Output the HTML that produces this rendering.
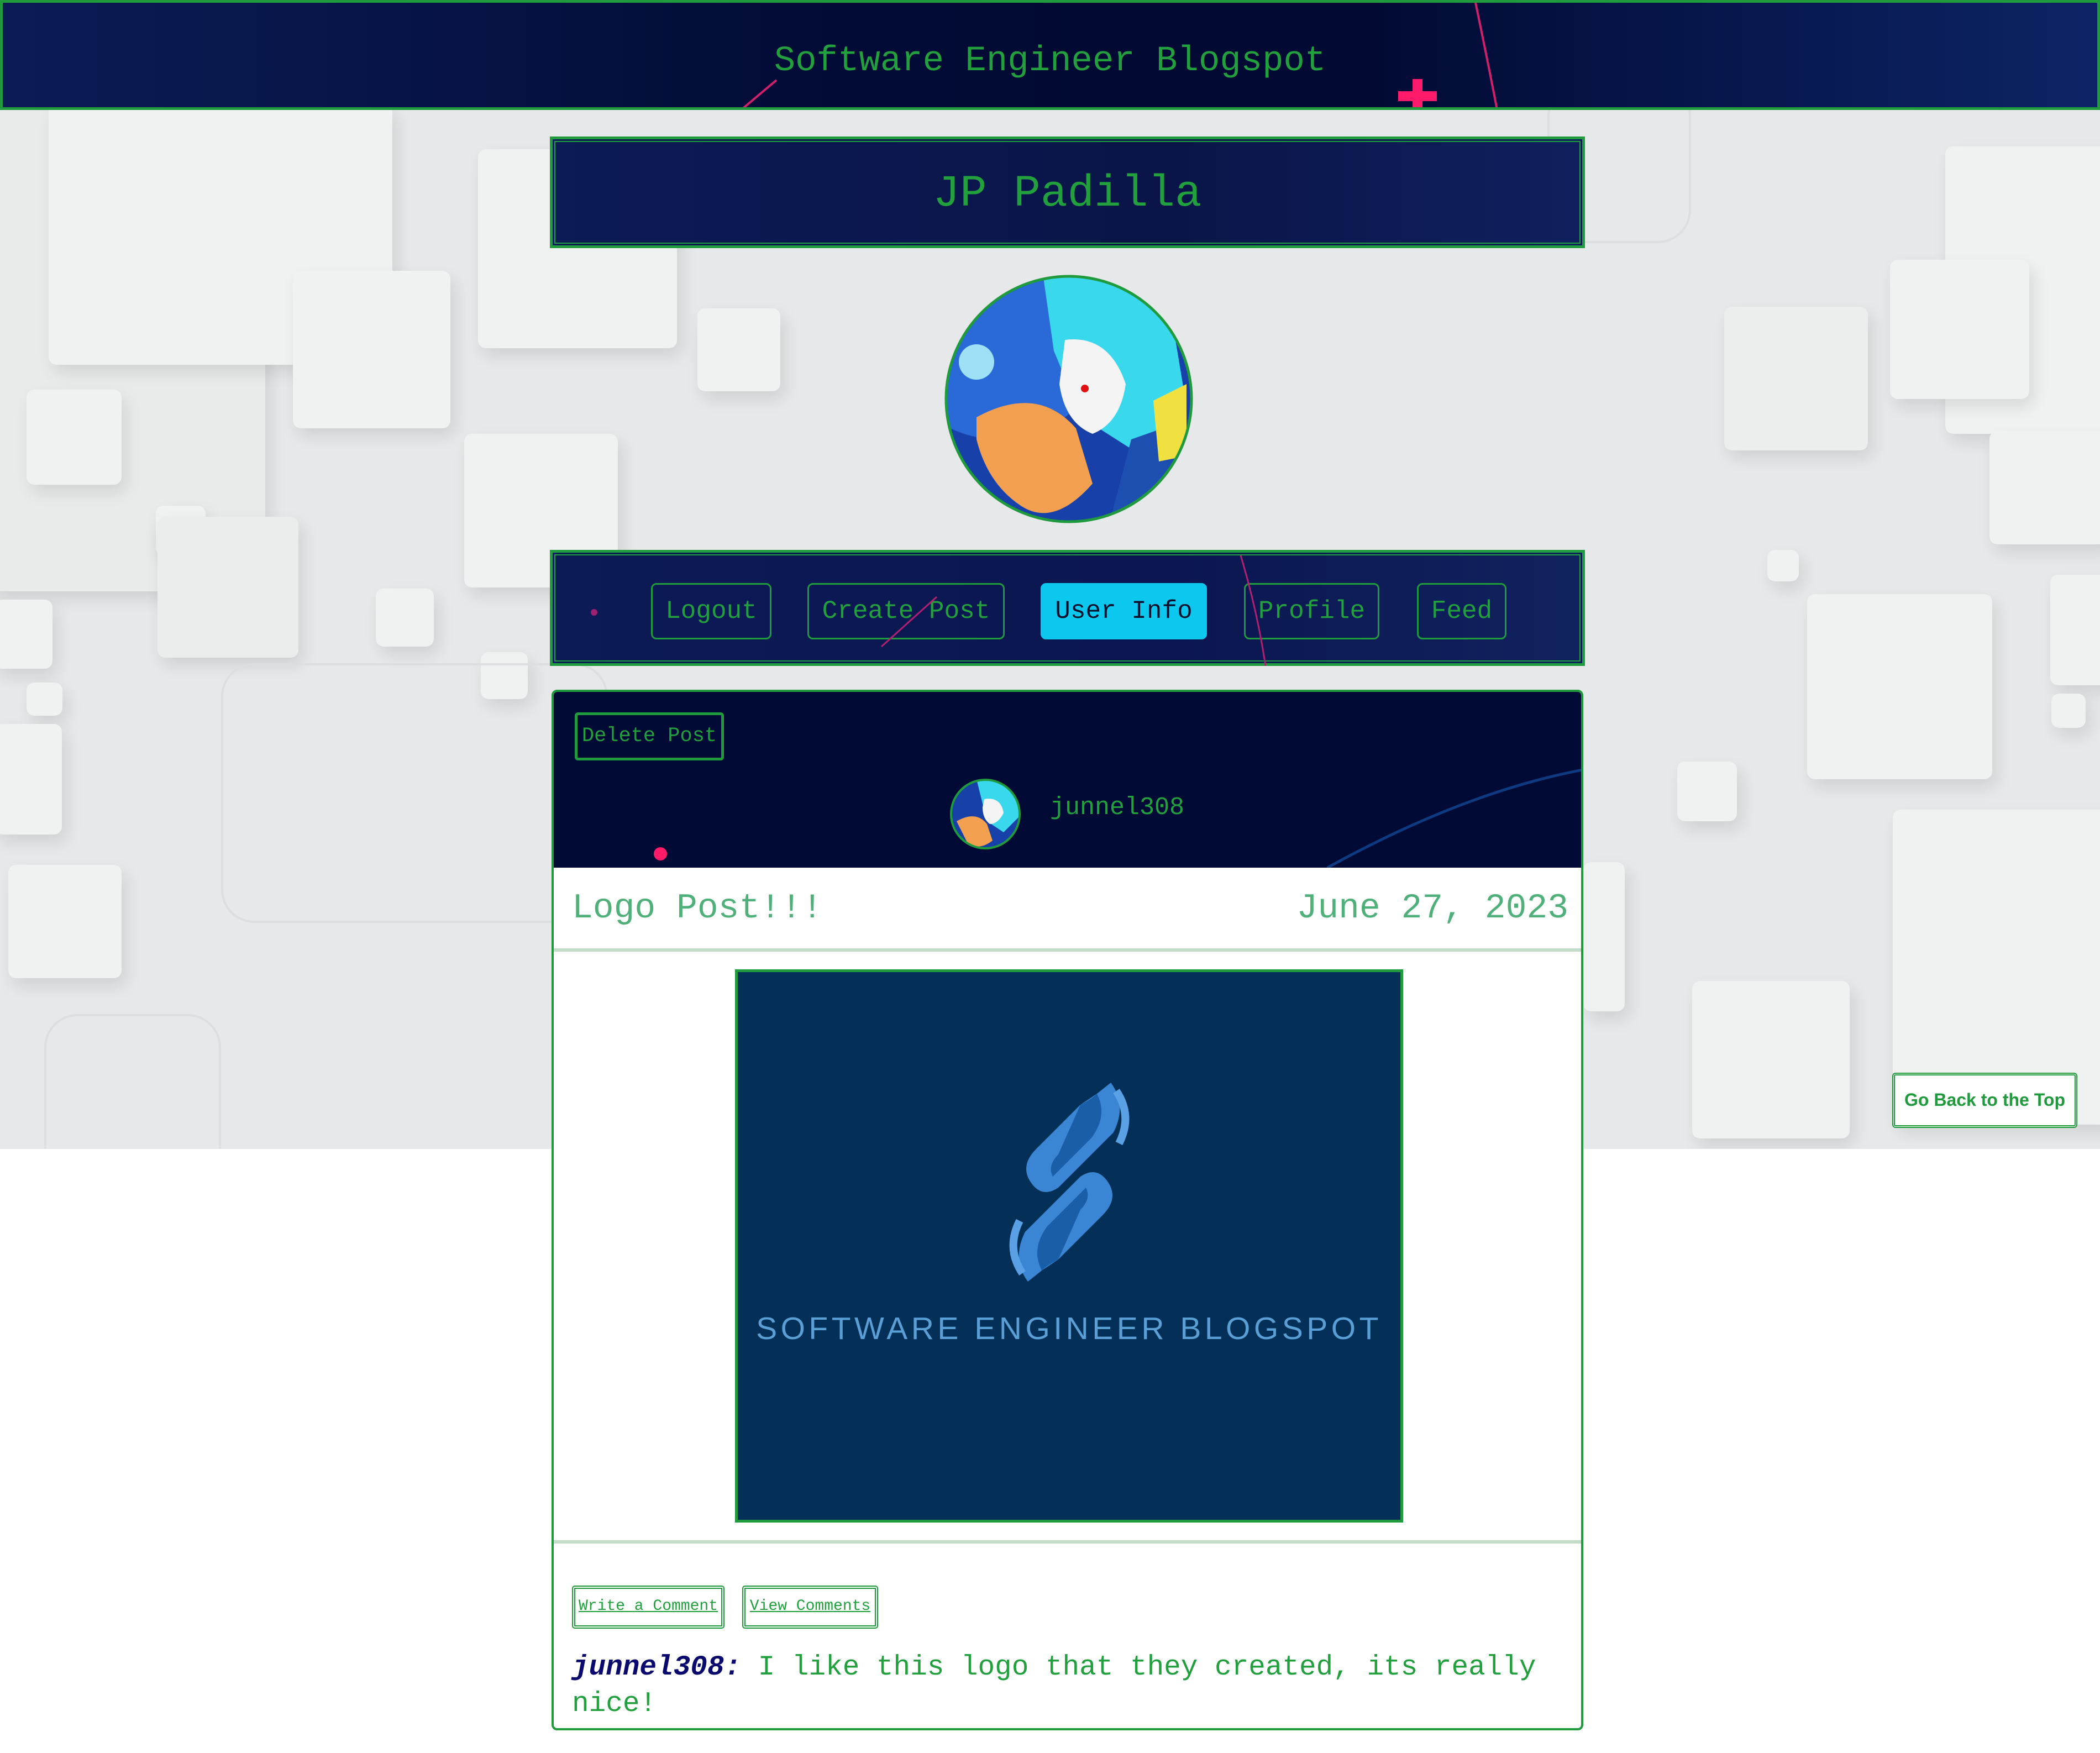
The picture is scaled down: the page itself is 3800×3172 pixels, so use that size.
<!DOCTYPE html>
<html><head><meta charset="utf-8"><style>
*{margin:0;padding:0;box-sizing:border-box}
html,body{width:3800px;height:3172px;overflow:hidden;background:#fff;font-family:"Liberation Mono","DejaVu Sans Mono",monospace}
.abs{position:absolute}
#bg{left:0;top:0;width:3800px;height:2079px;background:#e6e8e9;overflow:hidden}
.sq{position:absolute;background:#f0f1f1;border-radius:14px;box-shadow:8px 14px 30px rgba(0,0,0,.10)}
.sq2{position:absolute;border:4px solid #dcdfe0;border-radius:60px}
#hdr{left:0;top:0;width:3800px;height:199px;background:linear-gradient(90deg,#0b1c55 0%,#020b35 40%,#020a33 65%,#0c2466 100%);border:5px solid #1f9a3c;color:#22a03e;font-size:64px;text-align:center;line-height:212px;overflow:hidden}
.box{border:7px double #1fa03e;outline:3px solid #1f9a3c}
#name{left:998px;top:250px;width:1867px;height:196px;background:linear-gradient(90deg,#0c1a55,#0a1448 60%,#10205e);color:#22a03e;font-size:81px;text-align:center;line-height:190px}
#nav{left:998px;top:998px;width:1867px;height:204px;background:linear-gradient(90deg,#0c1a55,#0b1650 60%,#10225e)}
.btn{position:absolute;top:50px;height:102px;border:3px solid #1f9a3c;border-radius:10px;color:#22a03e;font-size:46px;line-height:96px;text-align:center}
#card{left:998px;top:1248px;width:1867px;height:1883px;border:4px solid #1f9a3c;border-radius:10px;background:#fff;overflow:hidden}
#dark{left:0;top:0;width:100%;height:318px;background:#000a35;overflow:hidden}
</style></head><body>
<div id="bg" class="abs">
 <div class="sq" style="left:-20px;top:200px;width:500px;height:870px;background:#e9ebeb"></div>
 <div class="sq" style="left:88px;top:190px;width:622px;height:470px"></div>
 <div class="sq" style="left:530px;top:490px;width:285px;height:285px"></div>
 <div class="sq" style="left:48px;top:705px;width:172px;height:172px"></div>
 <div class="sq" style="left:282px;top:915px;width:90px;height:90px"></div>
 <div class="sq" style="left:285px;top:935px;width:255px;height:255px;background:#ebecec"></div>
 <div class="sq" style="left:-10px;top:1085px;width:105px;height:125px"></div>
 <div class="sq" style="left:48px;top:1235px;width:65px;height:60px"></div>
 <div class="sq" style="left:-10px;top:1310px;width:122px;height:200px"></div>
 <div class="sq" style="left:15px;top:1565px;width:205px;height:205px"></div>
 <div class="sq" style="left:680px;top:1065px;width:105px;height:105px"></div>
 <div class="sq" style="left:840px;top:785px;width:278px;height:278px"></div>
 <div class="sq" style="left:865px;top:270px;width:360px;height:360px"></div>
 <div class="sq" style="left:1262px;top:558px;width:150px;height:150px"></div>
 <div class="sq" style="left:870px;top:1180px;width:85px;height:85px"></div>
 <div class="sq2" style="left:400px;top:1200px;width:700px;height:470px"></div>
 <div class="sq2" style="left:80px;top:1835px;width:320px;height:320px"></div>
 <div class="sq" style="left:3520px;top:265px;width:300px;height:520px"></div>
 <div class="sq" style="left:3420px;top:470px;width:252px;height:252px"></div>
 <div class="sq" style="left:3120px;top:555px;width:260px;height:260px;background:#eceeee"></div>
 <div class="sq" style="left:3600px;top:780px;width:220px;height:205px"></div>
 <div class="sq" style="left:3270px;top:1075px;width:335px;height:335px"></div>
 <div class="sq" style="left:3710px;top:1040px;width:120px;height:200px"></div>
 <div class="sq" style="left:3712px;top:1255px;width:62px;height:62px"></div>
 <div class="sq" style="left:3198px;top:995px;width:57px;height:57px"></div>
 <div class="sq" style="left:3035px;top:1378px;width:108px;height:108px"></div>
 <div class="sq" style="left:3425px;top:1465px;width:400px;height:570px"></div>
 <div class="sq" style="left:3062px;top:1775px;width:285px;height:285px"></div>
 <div class="sq" style="left:2865px;top:1560px;width:75px;height:270px"></div>
 <div class="sq2" style="left:2800px;top:150px;width:260px;height:290px"></div>
</div>

<div id="hdr" class="abs">Software Engineer Blogspot
 <svg class="abs" style="left:0;top:0" width="3800" height="199"><line x1="1330" y1="199" x2="1400" y2="140" stroke="#d0206a" stroke-width="4"/><path d="M2665 0 Q2690 120 2705 199" stroke="#d0206a" stroke-width="4" fill="none"/><rect x="2525" y="160" width="70" height="18" fill="#ff1a6a"/><rect x="2551" y="138" width="18" height="60" fill="#ff1a6a"/></svg>
</div>

<div id="name" class="abs box">JP Padilla</div>

<svg class="abs" style="left:1707px;top:495px" width="454" height="454">
 <defs><clipPath id="c1"><circle cx="227" cy="227" r="222"/></clipPath></defs>
 <g clip-path="url(#c1)">
  <rect width="454" height="454" fill="#1740a8"/>
  <circle cx="100" cy="100" r="200" fill="#2a6ad8"/>
  <path d="M180 0 L400 0 L440 240 L360 330 L250 260 L200 140Z" fill="#3ad8ec"/>
  <path d="M220 120 Q300 110 330 200 Q320 270 270 290 Q220 270 210 200Z" fill="#f4f4f4"/>
  <circle cx="256" cy="208" r="7" fill="#e01010"/>
  <path d="M60 260 Q170 200 240 280 L270 380 Q200 460 140 420 Q80 380 60 300Z" fill="#f2a050"/>
  <path d="M340 300 L454 260 L454 454 L300 454Z" fill="#1d4fb0"/>
  <path d="M380 230 L440 200 L440 330 L390 340Z" fill="#f0e040"/>
  <circle cx="60" cy="160" r="32" fill="#bff" opacity=".8"/>
 </g>
 <circle cx="227" cy="227" r="222" fill="none" stroke="#1f9a3c" stroke-width="5"/>
</svg>

<div id="nav" class="abs box">
 <div class="btn" style="left:173px;width:218px">Logout</div>
 <div class="btn" style="left:456px;width:357px">Create Post</div>
 <div class="btn" style="left:878px;width:301px;background:#0dc8ee;border-color:#0dc8ee;color:#06102a">User Info</div>
 <div class="btn" style="left:1246px;width:245px">Profile</div>
 <div class="btn" style="left:1559px;width:162px">Feed</div>
 <svg class="abs" style="left:0;top:0" width="1860" height="200"><path d="M1240 0 Q1270 100 1285 200" stroke="#b02070" stroke-width="3" fill="none"/><line x1="590" y1="165" x2="690" y2="75" stroke="#b02070" stroke-width="3"/><circle cx="70" cy="103" r="6" fill="#a02070"/></svg>
</div>

<div id="card" class="abs">
 <div id="dark" class="abs">
  <svg class="abs" style="left:0;top:0" width="1867" height="318"><path d="M1400 318 Q1650 180 1867 140" stroke="#0d3a80" stroke-width="5" fill="none"/><circle cx="193" cy="293" r="12" fill="#ff1a6a"/></svg>
  <div class="abs" style="left:38px;top:37px;width:270px;height:87px;border:5px solid #1f9a3c;border-radius:6px;color:#22a03e;font-size:37px;line-height:76px;text-align:center">Delete Post</div>
  <svg class="abs" style="left:714px;top:154px" width="134" height="134"><defs><clipPath id="c2"><circle cx="67" cy="67" r="62"/></clipPath></defs><g clip-path="url(#c2)"><rect width="134" height="134" fill="#1740a8"/><path d="M50 0 L120 0 L130 70 L100 100 L70 80Z" fill="#3ad8ec"/><path d="M65 40 Q95 35 100 65 Q90 85 75 85 Q62 75 62 55Z" fill="#f4f4f4"/><path d="M15 80 Q50 60 70 85 L80 115 Q55 134 35 120Z" fill="#f2a050"/></g><circle cx="67" cy="67" r="62" fill="none" stroke="#1f9a3c" stroke-width="4"/></svg>
  <div class="abs" style="left:898px;top:180px;color:#22a03e;font-size:45px;line-height:60px">junnel308</div>
 </div>
 <div class="abs" style="left:33px;top:352px;color:#4fb07a;font-size:63px;line-height:80px">Logo Post!!!</div>
 <div class="abs" style="right:23px;top:352px;color:#4fb07a;font-size:63px;line-height:80px">June 27, 2023</div>
 <div class="abs" style="left:0;top:464px;width:100%;height:6px;background:#c2dcc8"></div>
 <div class="abs" style="left:328px;top:502px;width:1209px;height:1001px;background:#043058;border:5px solid #1f9a3c;overflow:hidden">
  <svg class="abs" style="left:470px;top:200px" width="260" height="360" viewBox="0 0 260 360">
   <path d="M180 20 L205 0 Q235 40 210 90 L110 190 Q80 210 60 180 Q40 150 70 120 L150 40 Z" fill="#3a86d4"/>
   <path d="M150 40 Q170 30 180 20 Q200 60 170 100 L100 170 Q90 150 110 130Z" fill="#1b5ea8"/>
   <path d="M80 340 L55 360 Q25 320 50 270 L150 170 Q180 150 200 180 Q220 210 190 240 L110 320 Z" fill="#3a86d4"/>
   <path d="M110 320 Q90 330 80 340 Q60 300 90 260 L160 190 Q170 210 150 230Z" fill="#1b5ea8"/>
   <path d="M215 15 Q245 60 220 110" stroke="#5aa0e4" stroke-width="14" fill="none"/>
   <path d="M45 345 Q15 300 40 250" stroke="#5aa0e4" stroke-width="14" fill="none"/>
  </svg>
  <div class="abs" style="left:0;top:612px;width:100%;text-align:center;color:#5a9ed6;font-family:'Liberation Sans',sans-serif;font-size:57px;letter-spacing:6.5px;white-space:nowrap">SOFTWARE ENGINEER BLOGSPOT</div>
 </div>
 <div class="abs" style="left:0;top:1535px;width:100%;height:6px;background:#c2dcc8"></div>
 <div class="abs" style="left:33px;top:1617px;width:276px;height:78px;border:6px double #1f9a3c;border-radius:5px;color:#22a03e;font-size:28px;line-height:64px;text-align:center;text-decoration:underline">Write a Comment</div>
 <div class="abs" style="left:341px;top:1617px;width:246px;height:78px;border:6px double #1f9a3c;border-radius:5px;color:#22a03e;font-size:28px;line-height:64px;text-align:center;text-decoration:underline">View Comments</div>
 <div class="abs" style="left:33px;top:1733px;width:1800px;color:#22a03e;font-size:51px;line-height:66px"><b style="color:#0a0a6e;font-style:italic">junnel308:</b> I like this logo that they created, its really nice!</div>
</div>

<div class="abs" style="left:3424px;top:1941px;width:335px;height:100px;background:#fff;border:5px double #1f9a3c;border-radius:6px;color:#1f9a3c;font-family:'Liberation Sans',sans-serif;font-weight:bold;font-size:32px;line-height:88px;text-align:center">Go Back to the Top</div>
</body></html>
